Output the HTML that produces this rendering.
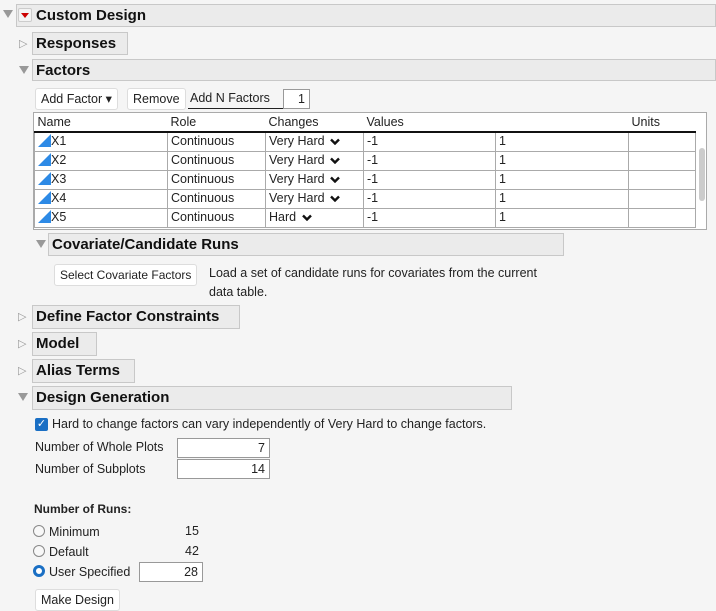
<!DOCTYPE html>
<html><head><meta charset="utf-8"><style>
*{box-sizing:border-box;margin:0;padding:0}
body{width:716px;height:610px;background:#f5f5f5;font-family:"Liberation Sans",sans-serif;font-size:12.5px;color:#222;position:relative;overflow:hidden}
.a{position:absolute;white-space:nowrap}
.hdr{position:absolute;background:#ebebeb;border:1px solid #c8c8c8;font-weight:bold;font-size:15px;color:#111;padding-left:3px;line-height:22px}
.tri{position:absolute;width:0;height:0}
.down{border-left:5px solid transparent;border-right:5px solid transparent;border-top:8px solid #999}
.rt{position:absolute;font-size:11px;color:#999}
.btn{position:absolute;background:#fff;border:1px solid #ddd;border-radius:3px;line-height:20px;padding:0 5px;font-size:12.5px}
.inp{position:absolute;background:#fff;border:1px solid #999;text-align:right;padding-right:4px;line-height:18px}
table{border-collapse:collapse;position:absolute;left:34px;top:113px;font-size:12.5px}
td{border:1px solid #aaa;height:19px;padding:0 0 0 3px;white-space:nowrap;line-height:17px;overflow:hidden}
tr.h td{border:none;border-bottom:2px solid #111;height:19px}
.ic{display:inline-block;width:0;height:0;border-left:13px solid transparent;border-bottom:13px solid #2d8ae6;vertical-align:-2px}
.ch{display:inline-block;vertical-align:middle;margin-left:2px}
.rad{position:absolute;width:12px;height:12px;border:1px solid #888;border-radius:50%;background:#f8f8f8}
</style></head><body>
<div class="tri down" style="left:3px;top:10px"></div>
<div class="hdr" style="left:16px;top:4px;width:700px;height:23px;padding-left:19px">Custom Design</div>
<div class="a" style="left:18px;top:8px;width:14px;height:14px;background:#f3f3f3;border:1px solid #ccc;border-radius:2px"></div>
<div class="tri" style="left:21px;top:13px;border-left:4px solid transparent;border-right:4px solid transparent;border-top:5px solid #c00"></div>

<div class="rt" style="left:19px;top:37px">▷</div>
<div class="hdr" style="left:32px;top:32px;width:96px;height:23px">Responses</div>
<div class="tri down" style="left:19px;top:66px"></div>
<div class="hdr" style="left:32px;top:59px;width:684px;height:22px">Factors</div>

<div class="btn" style="left:35px;top:88px">Add Factor ▾</div>
<div class="btn" style="left:127px;top:88px">Remove</div>
<div class="a" style="left:188px;top:89px;border-bottom:1px solid #222;width:95px;line-height:19px;padding-left:2px">Add N Factors</div>
<div class="inp" style="left:283px;top:89px;width:27px">1</div>

<div class="a" style="left:33px;top:112px;width:674px;height:118px;border:1px solid #aaa;background:#fff"></div>
<table>
<tr class="h"><td style="width:133px">Name</td><td style="width:98px">Role</td><td style="width:98px">Changes</td><td style="width:132px">Values</td><td style="width:133px"></td><td style="width:67px">Units</td></tr>
<tr><td><span class="ic"></span>X1</td><td>Continuous</td><td>Very Hard <svg class="ch" width="10" height="7"><path d="M1 1.5L5 5.5L9 1.5" stroke="#111" stroke-width="2.4" fill="none"/></svg></td><td>-1</td><td>1</td><td></td></tr>
<tr><td><span class="ic"></span>X2</td><td>Continuous</td><td>Very Hard <svg class="ch" width="10" height="7"><path d="M1 1.5L5 5.5L9 1.5" stroke="#111" stroke-width="2.4" fill="none"/></svg></td><td>-1</td><td>1</td><td></td></tr>
<tr><td><span class="ic"></span>X3</td><td>Continuous</td><td>Very Hard <svg class="ch" width="10" height="7"><path d="M1 1.5L5 5.5L9 1.5" stroke="#111" stroke-width="2.4" fill="none"/></svg></td><td>-1</td><td>1</td><td></td></tr>
<tr><td><span class="ic"></span>X4</td><td>Continuous</td><td>Very Hard <svg class="ch" width="10" height="7"><path d="M1 1.5L5 5.5L9 1.5" stroke="#111" stroke-width="2.4" fill="none"/></svg></td><td>-1</td><td>1</td><td></td></tr>
<tr><td><span class="ic"></span>X5</td><td>Continuous</td><td>Hard <svg class="ch" width="10" height="7"><path d="M1 1.5L5 5.5L9 1.5" stroke="#111" stroke-width="2.4" fill="none"/></svg></td><td>-1</td><td>1</td><td></td></tr>
</table>
<div class="a" style="left:699px;top:148px;width:6px;height:53px;background:#ccc;border-radius:3px"></div>

<div class="tri down" style="left:36px;top:240px"></div>
<div class="hdr" style="left:48px;top:233px;width:516px;height:23px">Covariate/Candidate Runs</div>
<div class="btn" style="left:54px;top:264px;font-size:12px">Select Covariate Factors</div>
<div class="a" style="left:209px;top:264px;line-height:19px">Load a set of candidate runs for covariates from the current<br>data table.</div>

<div class="rt" style="left:18px;top:310px">▷</div>
<div class="hdr" style="left:32px;top:305px;width:208px;height:24px">Define Factor Constraints</div>
<div class="rt" style="left:18px;top:337px">▷</div>
<div class="hdr" style="left:32px;top:332px;width:65px;height:24px">Model</div>
<div class="rt" style="left:18px;top:364px">▷</div>
<div class="hdr" style="left:32px;top:359px;width:103px;height:24px">Alias Terms</div>
<div class="tri down" style="left:18px;top:393px"></div>
<div class="hdr" style="left:32px;top:386px;width:480px;height:24px">Design Generation</div>

<div class="a" style="left:35px;top:418px;width:13px;height:13px;background:#1a6fc4;border-radius:2px;color:#fff;font-size:11px;line-height:13px;text-align:center">✓</div>
<div class="a" style="left:52px;top:417px">Hard to change factors can vary independently of Very Hard to change factors.</div>
<div class="a" style="left:35px;top:440px">Number of Whole Plots</div>
<div class="inp" style="left:177px;top:438px;width:93px">7</div>
<div class="a" style="left:35px;top:462px">Number of Subplots</div>
<div class="inp" style="left:177px;top:459px;width:93px">14</div>

<div class="a" style="left:34px;top:502px;font-weight:bold;font-size:12px">Number of Runs:</div>
<div class="rad" style="left:33px;top:525px"></div><div class="a" style="left:49px;top:525px">Minimum</div><div class="a" style="left:185px;top:524px">15</div>
<div class="rad" style="left:33px;top:545px"></div><div class="a" style="left:49px;top:545px">Default</div><div class="a" style="left:185px;top:544px">42</div>
<div class="rad" style="left:33px;top:565px;border:3px solid #1a6fc4;background:#fff"></div><div class="a" style="left:49px;top:565px">User Specified</div>
<div class="inp" style="left:139px;top:562px;width:64px">28</div>
<div class="btn" style="left:35px;top:589px">Make Design</div>
</body></html>
